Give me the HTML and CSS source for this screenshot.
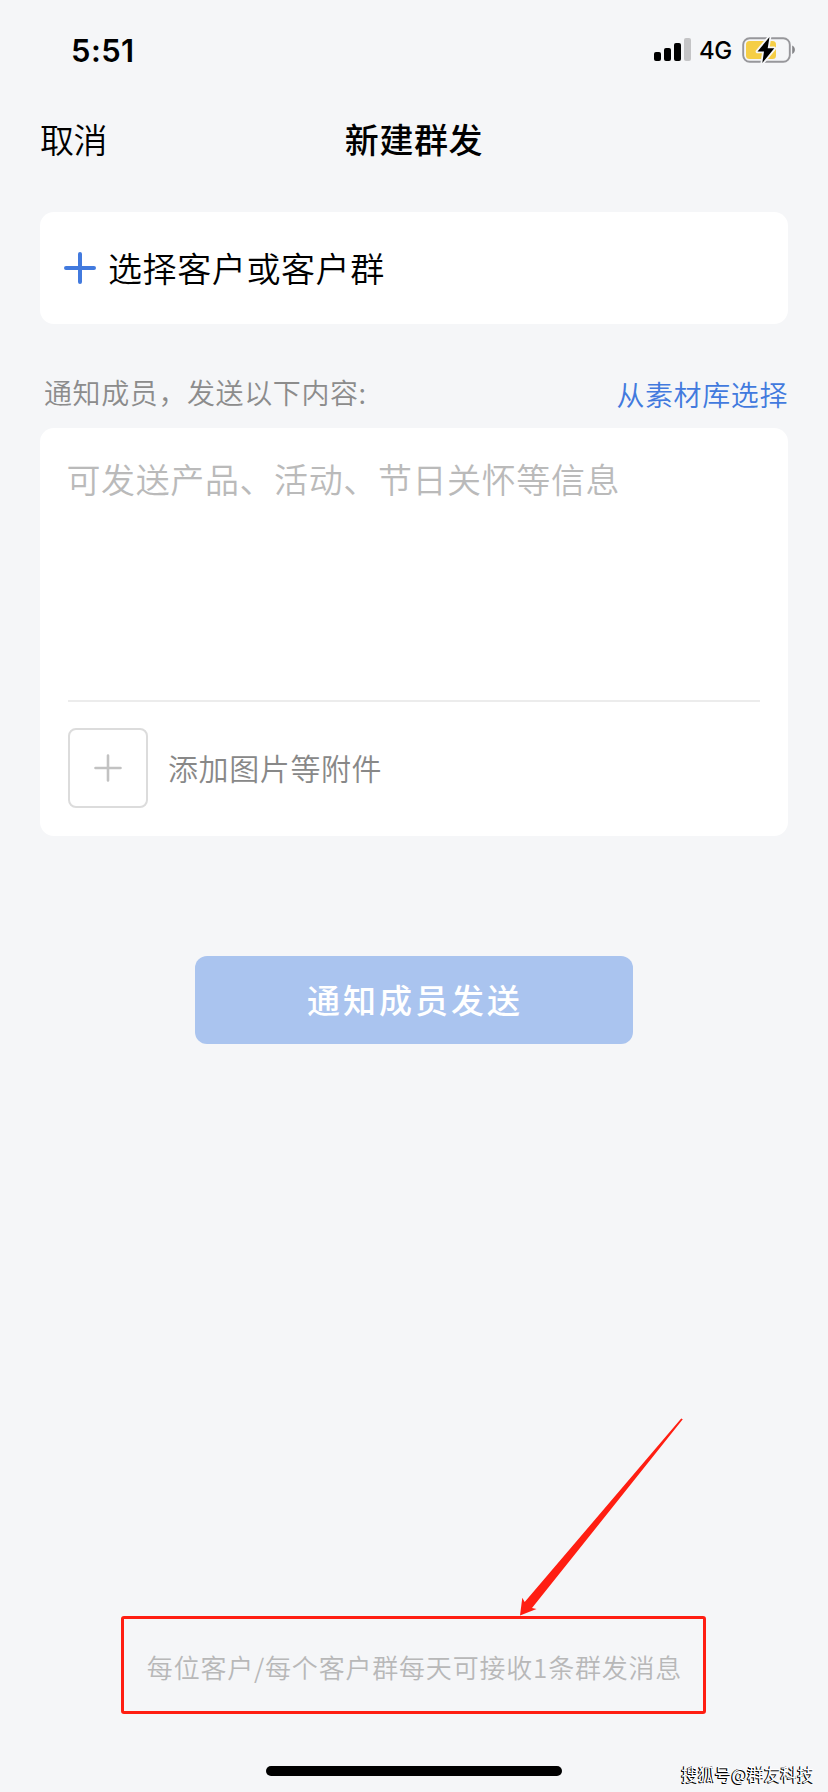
FILE: index.html
```html
<!DOCTYPE html>
<html lang="zh-CN">
<head>
<meta charset="utf-8">
<title>新建群发</title>
<link rel="stylesheet" href="styles.css">
</head>
<body>
<div class="screen">
  <header class="status">
    <span class="time">5:51</span>
    <div class="indicators">
      <svg class="signal" width="38" height="24" viewBox="0 0 38 24">
        <rect x="0" y="14" width="7" height="9" rx="2"/>
        <rect x="10" y="10" width="7" height="13" rx="2"/>
        <rect x="20" y="5" width="7" height="18" rx="2"/>
        <rect x="30" y="0" width="7" height="23" rx="2" fill="#c4c4c6"/>
      </svg>
      <span class="network">4G</span>
      <svg class="battery" width="54" height="28" viewBox="0 0 54 28">
        <rect x="1.2" y="2.2" width="46.6" height="23.6" rx="6.5" fill="none" stroke="#97979b" stroke-width="1.9"/>
        <path d="M50.2 9.5c3.6 1.2 3.6 7.300 0 8.500z" fill="#858589"/>
        <rect x="4" y="5" width="30" height="18" rx="3.500" fill="#f5ce46"/>
        <path d="M27.500 1 15.500 15.500h6.500L20.300 27 32.300 12.300H25.700z" fill="#000" stroke="#f5f6f8" stroke-width="3.600" stroke-linejoin="round" paint-order="stroke"/>
      </svg>
    </div>
  </header>

  <nav class="nav">
    <span class="cancel">取消</span>
    <h1 class="title">新建群发</h1>
  </nav>

  <main class="content">
    <section class="card picker">
      <svg width="32" height="32" viewBox="0 0 32 32"><path d="M16 2v28M2 16h28" stroke="#427ade" stroke-width="4" stroke-linecap="round"/></svg>
      <span class="picker-label">选择客户或客户群</span>
    </section>

    <div class="section-head">
      <span class="caption">通知成员，发送以下内容:</span>
      <a class="library">从素材库选择</a>
    </div>

    <section class="card editor">
      <div class="placeholder">可发送产品、活动、节日关怀等信息</div>
      <div class="attach">
        <div class="attach-box">
          <svg width="28" height="28" viewBox="0 0 28 28"><path d="M14 1.500v25M1.500 14h25" stroke="#c2c2c2" stroke-width="2.600" stroke-linecap="round"/></svg>
        </div>
        <span class="attach-label">添加图片等附件</span>
      </div>
    </section>

    <button class="submit">通知成员发送</button>
  </main>

  <footer class="footer">
    <div class="notice">
      <span>每位客户/每个客户群每天可接收1条群发消息</span>
      <svg class="arrow" width="166" height="200" viewBox="0 0 166 200"><path d="M163.200 0.500 164.800 1.300 14 190 18.500 191 2 197.600 4.300 179.800 6.700 184z" fill="#ff1e12"/></svg>
    </div>
    <div class="home-indicator"></div>
  </footer>
  <div class="watermark">搜狐号@群友科技</div>
</div>
</body>
</html>
```
FILE: styles.css
```css
* { box-sizing: border-box; }
body {
  margin: 0;
  background: #f5f6f8;
  color: #000;
  font-family: "Noto Sans CJK SC", sans-serif;
}
.screen {
  position: relative;
  display: flex;
  flex-direction: column;
  width: 828px;
  height: 1792px;
  overflow: hidden;
  white-space: nowrap;
}
.status {
  display: flex;
  justify-content: space-between;
  align-items: center;
  height: 100px;
  padding: 0 32px 0 71px;
  font-family: Inter, sans-serif;
}
.time { font-size: 31px; font-weight: 600; letter-spacing: 0.4px; }
.indicators { display: flex; align-items: center; }
.network { width: 32px; margin: 1px 11px 0 7px; font-size: 24px; font-weight: 450; letter-spacing: -0.5px; }
.nav {
  display: grid;
  grid-template-columns: 1fr auto 1fr;
  align-items: center;
  height: 80px;
  padding: 0 40px 4px;
}
.cancel { font-size: 34px; font-weight: 350; letter-spacing: -0.5px; }
.title { margin: 0; font-size: 34px; font-weight: 500; letter-spacing: 0.6px; }
.content { display: flex; flex-direction: column; padding: 32px 40px 0; }
.card { background: #fff; border-radius: 14px; }
.picker {
  display: flex;
  align-items: center;
  gap: 12px;
  height: 112px;
  padding: 0 24px;
}
.picker-label { padding-bottom: 2px; font-size: 34px; font-weight: 350; letter-spacing: 0.6px; }
.section-head {
  display: flex;
  justify-content: space-between;
  align-items: center;
  height: 104px;
  padding: 32px 0 0 4px;
}
.caption { color: #8c8c8c; font-size: 28px; font-weight: 350; letter-spacing: 0.6px; }
.library { padding-top: 3px; color: #427ade; font-size: 28px; font-weight: 350; letter-spacing: 0.6px; }
.editor { height: 408px; padding: 0 28px; }
.placeholder {
  height: 274px;
  padding-top: 26px;
  border-bottom: 2px solid #ececec;
  color: #bababa;
  font-size: 34px;
  line-height: 50px;
  font-weight: 350;
  letter-spacing: 0.6px;
  text-indent: -1.5px;
}
.attach { display: flex; align-items: center; gap: 20px; padding-top: 26px; }
.attach-box {
  display: flex;
  align-items: center;
  justify-content: center;
  width: 80px;
  height: 80px;
  border: 2px solid #dcdcdc;
  border-radius: 8px;
}
.attach-label { padding-bottom: 3px; color: #888; font-size: 30px; font-weight: 350; letter-spacing: 0.6px; }
.submit {
  align-self: center;
  width: 438px;
  height: 88px;
  margin-top: 120px;
  padding: 0 0 2px 2px;
  border: 0;
  border-radius: 12px;
  background: #aac4ef;
  color: #fff;
  font: 500 33px "Noto Sans CJK SC", sans-serif;
  letter-spacing: 3px;
}
.footer {
  display: flex;
  flex-direction: column;
  align-items: center;
  margin-top: auto;
  padding-bottom: 16px;
}
.notice {
  position: relative;
  display: flex;
  align-items: center;
  justify-content: center;
  width: 585px;
  height: 98px;
  margin: 0 1px 52px 0;
  padding: 2px 0 0 2px;
  border: 3px solid #ff1e12;
  border-radius: 3px;
  color: #b8b8b8;
  font-size: 26px;
  font-weight: 350;
  letter-spacing: 0.8px;
}
.arrow { position: absolute; left: 393.5px; top: -201px; }
.home-indicator { width: 296px; height: 10px; border-radius: 5px; background: #000; }
.watermark {
  position: absolute;
  right: 14px;
  bottom: 7px;
  color: #fff;
  font-size: 17px;
  line-height: 22px;
  font-weight: 400;
  letter-spacing: -0.3px;
  text-shadow: -1px 0 0 #000, -1px 1px 0 #000;
}
```
